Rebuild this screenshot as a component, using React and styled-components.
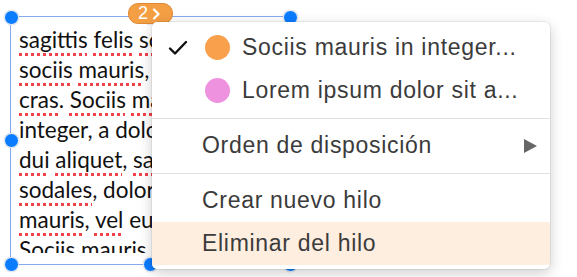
import styled, { createGlobalStyle } from "styled-components"

const GlobalStyle = createGlobalStyle`
  html, body {
    margin: 0;
    background: #ffffff;
  }
  body {
    width: 577px;
    height: 277px;
    overflow: hidden;
  }
`

const lines = [
  [["sagittis", true], ["felis", true], ["sodales", true], ["dolor", true]],
  [["sociis", true], ["mauris,", true], ["in", false], ["integer", false]],
  [["cras.", true], ["Sociis", true], ["mauris", true], ["in", false]],
  [["integer,", false], ["a", false], ["dolor", false], ["netus", false]],
  [["dui", true], ["aliquet,", true], ["sagittis", true], ["felis", true]],
  [["sodales,", true], ["dolor", false], ["sociis", false], ["in", false]],
  [["mauris,", true], ["vel", true], ["eu", false], ["libero", false]],
  [["Sociis", false], ["mauris", false], ["in", false], ["integer", false]],
]

const handles = [
  ["0%", "0%"], ["50%", "0%"], ["100%", "0%"],
  ["0%", "50%"], ["100%", "50%"],
  ["0%", "100%"], ["50%", "100%"], ["100%", "100%"],
]

const App = () => {
  return (
    <>
      <GlobalStyle />
      <Canvas>
        <TextBox>
          <TextArea>
            {lines.map((line, i) => (
              <Line key={i}>
                {line.map(([word, misspelled], j) => (
                  <span key={j}>
                    {misspelled ? <Word>{word.replace(/[,.]$/, "")}</Word> : word.replace(/[,.]$/, "")}
                    {/[,.]$/.test(word) ? word.slice(-1) : ""}
                    {j < line.length - 1 ? " " : ""}
                  </span>
                ))}
              </Line>
            ))}
          </TextArea>
          {handles.map(([x, y], i) => (
            <Handle key={i} $x={x} $y={y} />
          ))}
          <Badge>
            2
            <svg width="9" height="12" viewBox="0 0 9 12">
              <path d="M2 1.5 L6.5 6 L2 10.5" fill="none" stroke="#fff" strokeWidth="2.2" strokeLinecap="round" strokeLinejoin="round" />
            </svg>
          </Badge>
        </TextBox>

        <Menu>
          <Item>
            <Check>
              <svg width="20" height="16" viewBox="0 0 20 16">
                <path d="M2 8.5 L7 13.5 L18 2" fill="none" stroke="#111" strokeWidth="2.4" strokeLinecap="round" strokeLinejoin="round" />
              </svg>
            </Check>
            <Dot $color="#f8a04c" />
            <Label>Sociis mauris in integer...</Label>
          </Item>
          <Item>
            <Check />
            <Dot $color="#ee91de" />
            <Label>Lorem ipsum dolor sit a...</Label>
          </Item>
          <Separator />
          <Item $plain>
            <Label>Orden de disposición</Label>
            <Arrow />
          </Item>
          <Separator />
          <Item $plain>
            <Label>Crear nuevo hilo</Label>
          </Item>
          <Item $plain $active>
            <Label>Eliminar del hilo</Label>
          </Item>
        </Menu>
      </Canvas>
    </>
  )
}

const Canvas = styled.div`
  position: relative;
  width: 577px;
  height: 277px;
  padding: 16px 0 0 10px;
  box-sizing: border-box;
`

const TextBox = styled.div`
  position: relative;
  width: 281px;
  height: 249px;
  border: 1px solid #86a9ee;
  box-sizing: border-box;
  background: #fff;
`

const TextArea = styled.div`
  height: 236px;
  padding: 8px 0 0 8px;
  box-sizing: border-box;
  overflow: hidden;
  font-family: Lato, "Noto Sans", sans-serif;
  font-size: 22.5px;
  line-height: 30px;
  color: #111;
`

const Line = styled.div`
  white-space: nowrap;
`

const Word = styled.span`
  text-decoration: underline dotted #f0424a;
  text-decoration-thickness: 2.5px;
  text-underline-offset: 5px;
`

const Handle = styled.span`
  position: absolute;
  left: ${(p) => p.$x};
  top: ${(p) => p.$y};
  width: 15px;
  height: 15px;
  margin: -7.5px 0 0 -7.5px;
  border-radius: 50%;
  background: #0b7bff;
  border: 1px solid #fff;
  box-shadow: 0 0 1px rgba(0, 0, 0, 0.35);
  box-sizing: border-box;
`

const Badge = styled.div`
  position: absolute;
  left: 117px;
  top: -14px;
  width: 45px;
  height: 21px;
  border-radius: 10px;
  background: #f59f45;
  border: 1px solid #de8a33;
  box-sizing: border-box;
  display: flex;
  align-items: center;
  justify-content: center;
  gap: 4px;
  padding-right: 2px;
  font-family: "Liberation Sans", sans-serif;
  font-size: 18px;
  color: #fff;
`

const Menu = styled.div`
  position: absolute;
  left: 152px;
  top: 22px;
  width: 398px;
  padding: 4px 0;
  background: #fff;
  border-radius: 5px;
  box-shadow: 0 0 0 0.5px rgba(0, 0, 0, 0.12), 0 4px 14px rgba(0, 0, 0, 0.2);
  font-family: "Liberation Sans", sans-serif;
  font-size: 23px;
  letter-spacing: 0.7px;
  color: #3b3b3b;
  overflow: hidden;
`

const Item = styled.div`
  height: 43px;
  display: flex;
  align-items: center;
  padding-left: ${(p) => (p.$plain ? "50px" : "16px")};
  padding-right: 13px;
  background: ${(p) => (p.$active ? "#fdeee0" : "transparent")};
`

const Check = styled.span`
  width: 21px;
  height: 16px;
  display: flex;
  align-items: center;
  margin-right: 16px;
`

const Dot = styled.span`
  width: 25px;
  height: 25px;
  border-radius: 50%;
  background: ${(p) => p.$color};
  margin-right: 12px;
  flex-shrink: 0;
`

const Label = styled.span`
  flex: 1;
  white-space: nowrap;
`

const Arrow = styled.span`
  width: 0;
  height: 0;
  border-top: 7px solid transparent;
  border-bottom: 7px solid transparent;
  border-left: 13px solid #666;
`

const Separator = styled.div`
  height: 1px;
  background: #e2e2e2;
  margin: 6px 0 5px;
`

export default App
